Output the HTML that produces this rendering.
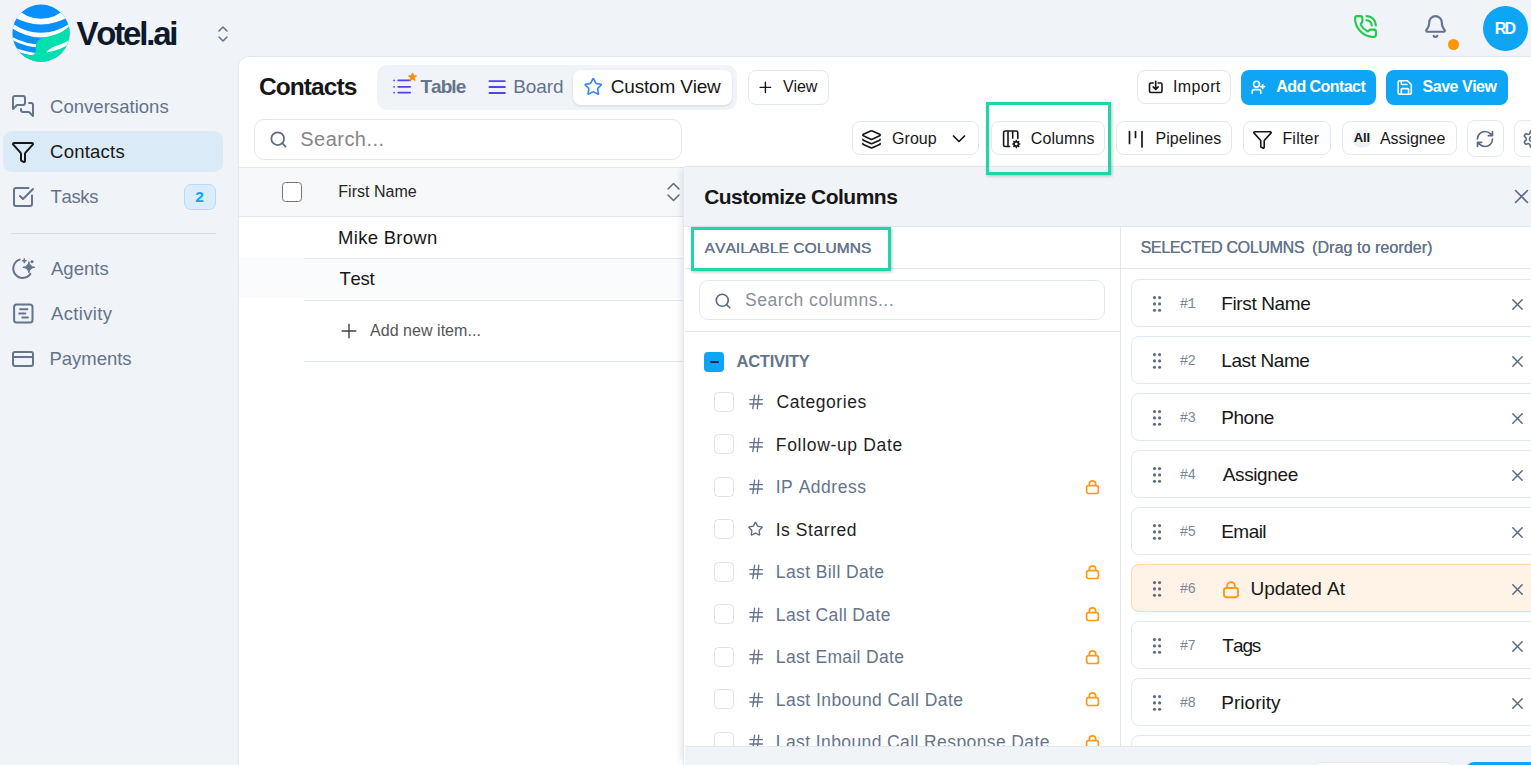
<!DOCTYPE html>
<html><head><meta charset="utf-8"><title>Contacts</title>
<style>
html,body{margin:0;padding:0;}
body{width:1531px;height:765px;overflow:hidden;position:relative;background:#f0f3f8;font-family:"Liberation Sans",sans-serif;font-kerning:none;}
.t{position:absolute;line-height:1;white-space:nowrap;font-kerning:none;}
.b{position:absolute;box-sizing:border-box;}
svg.b{overflow:visible;}
</style></head><body>
<div class="b" style="left:238px;top:56px;width:1293px;height:709px;background:#fff;border-left:1px solid #e2e8f0;border-top:1px solid #e2e8f0;border-top-left-radius:10px;"></div>
<svg class="b" style="left:12px;top:4px;" width="58" height="58" viewBox="0 0 58 58" fill="none"><defs><clipPath id="gc"><circle cx="29" cy="29.2" r="28.6"/></clipPath></defs><g clip-path="url(#gc)"><rect x="0" y="0" width="58" height="60" fill="#0a90fb"/><path d="M-1 0.5 Q29 29.1 59 0.5 L59 11.5 Q29 29.5 -1 11.5 Z" fill="#fff"/><path d="M-1 18.8 Q29 38.8 59 18.8 L59 23.5 Q29 43.5 -1 23.5 Z" fill="#fff"/><path d="M-1 32.5 Q29 48.5 59 32.5 L59 35.5 Q29 51.5 -1 35.5 Z" fill="#fff"/><path d="M-1 42 Q29 56 59 42 L59 45 Q29 59 -1 45 Z" fill="#fff"/><path d="M60 18 C 55 27 45 31 34 33 C 27 34.5 24 37.5 23.9 42 L 23.9 46 C 23.9 49 21.5 51.5 17.5 51.3 C 13 51 10 50 7.9 48.2 L 0 60 L 60 60 Z" fill="#00dfae"/><path d="M34.1 48.4 C 37 45 42 42 48 40.5 C 52 39.4 55 37.5 58 35.5 L 58 39.5 C 52 43.5 44 47 34.1 48.4 Z" fill="#fff"/></g></svg>
<div class="t" style="left:76.47px;top:17.00px;font-size:33px;font-weight:700;color:#0c1a2b;letter-spacing:-2.187px;font-family:'Liberation Sans', sans-serif;">Votel.ai</div>
<svg class="b" style="left:216px;top:25px;" width="14" height="18" viewBox="0 0 14 18" fill="none"><path d="M3 6 L7 2 L11 6 M3 12 L7 16 L11 12" stroke="#64748b" stroke-width="1.6" stroke-linecap="round" stroke-linejoin="round"/></svg>
<svg class="b" style="left:1353px;top:14px;" width="25" height="25" viewBox="0 0 24 24" fill="none"><path d="M13 2a9 9 0 0 1 9 9" stroke="#1ec94c" stroke-width="2" stroke-linecap="round"/><path d="M13 6a5 5 0 0 1 5 5" stroke="#1ec94c" stroke-width="2" stroke-linecap="round"/><path d="M13.832 16.568a1 1 0 0 0 1.213-.303l.355-.465A2 2 0 0 1 17 15h3a2 2 0 0 1 2 2v3a2 2 0 0 1-2 2A18 18 0 0 1 2 4a2 2 0 0 1 2-2h3a2 2 0 0 1 2 2v3a2 2 0 0 1-.8 1.6l-.468.351a1 1 0 0 0-.292 1.233 14 14 0 0 0 6.392 6.384" stroke="#1ec94c" stroke-width="2" stroke-linecap="round" stroke-linejoin="round"/></svg>
<svg class="b" style="left:1423px;top:14px;" width="25" height="25" viewBox="0 0 24 24" fill="none"><path d="M10.268 21a2 2 0 0 0 3.464 0" stroke="#64748b" stroke-width="2" stroke-linecap="round"/><path d="M3.262 15.326A1 1 0 0 0 4 17h16a1 1 0 0 0 .74-1.673C19.41 13.956 18 12.499 18 8A6 6 0 0 0 6 8c0 4.499-1.411 5.956-2.738 7.326" stroke="#64748b" stroke-width="2" stroke-linecap="round" stroke-linejoin="round"/></svg>
<div class="b" style="left:1447.5px;top:38.5px;width:11px;height:11px;background:#ff9500;border-radius:50%;"></div>
<div class="b" style="left:1483px;top:6px;width:45px;height:45px;background:#0ea5f5;border-radius:50%;"></div>
<div class="t" style="left:1494.73px;top:21.00px;font-size:16px;font-weight:700;color:#fff;letter-spacing:-1.767px;font-family:'Liberation Sans', sans-serif;">RD</div>
<div class="b" style="left:3px;top:131px;width:220px;height:41px;background:#dbeaf7;border-radius:9px;"></div>
<svg class="b" style="left:11px;top:94px;" width="24" height="24" viewBox="0 0 24 24" fill="none"><path d="M14 9a2 2 0 0 1-2 2H6l-4 4V4a2 2 0 0 1 2-2h8a2 2 0 0 1 2 2z" stroke="#64748b" stroke-width="2" stroke-linecap="round" stroke-linejoin="round"/><path d="M18 9h2a2 2 0 0 1 2 2v11l-4-4h-6a2 2 0 0 1-2-2v-1" stroke="#64748b" stroke-width="2" stroke-linecap="round" stroke-linejoin="round"/></svg>
<div class="t" style="left:50.06px;top:98.00px;font-size:18.5px;font-weight:400;color:#64748b;letter-spacing:0.030px;font-family:'Liberation Sans', sans-serif;">Conversations</div>
<svg class="b" style="left:11px;top:140px;" width="24" height="24" viewBox="0 0 24 24" fill="none"><path d="M10 20a1 1 0 0 0 .553.895l2 1A1 1 0 0 0 14 21v-7a2 2 0 0 1 .517-1.341L21.74 4.67A1 1 0 0 0 21 3H3a1 1 0 0 0-.742 1.67l7.225 7.989A2 2 0 0 1 10 14z" stroke="#171717" stroke-width="2" stroke-linecap="round" stroke-linejoin="round"/></svg>
<div class="t" style="left:50.06px;top:143.00px;font-size:18.5px;font-weight:400;color:#171717;letter-spacing:0.229px;font-family:'Liberation Sans', sans-serif;">Contacts</div>
<svg class="b" style="left:11px;top:185px;" width="24" height="24" viewBox="0 0 24 24" fill="none"><path d="M21 10.5V19a2 2 0 0 1-2 2H5a2 2 0 0 1-2-2V5a2 2 0 0 1 2-2h12.5" stroke="#64748b" stroke-width="2" stroke-linecap="round" stroke-linejoin="round"/><path d="m9 11 3 3L22 4" stroke="#64748b" stroke-width="2" stroke-linecap="round" stroke-linejoin="round"/></svg>
<div class="t" style="left:50.58px;top:188.00px;font-size:18.5px;font-weight:400;color:#64748b;letter-spacing:-0.364px;font-family:'Liberation Sans', sans-serif;">Tasks</div>
<div class="b" style="left:184px;top:184px;width:32px;height:26px;background:#dbedfa;border:1px solid #b3dcf8;border-radius:7px;"></div>
<div class="t" style="left:195.26px;top:189.00px;font-size:15.5px;font-weight:700;color:#0ea5f5;letter-spacing:0.000px;font-family:'Liberation Sans', sans-serif;">2</div>
<div class="b" style="left:11px;top:233px;width:205px;height:1px;background:#d9dee6;"></div>
<svg class="b" style="left:11px;top:257px;" width="24" height="24" viewBox="0 0 24 24" fill="none"><path d="M8.7 2.6 A9.4 9.4 0 1 0 19.4 16.9" stroke="#64748b" stroke-width="2" stroke-linecap="round" stroke-linejoin="round"/><path d="M17.9 4.7 Q18.6 9.6 23.9 10.3 Q18.6 11 17.9 15.9 Q17.2 11 11.9 10.3 Q17.2 9.6 17.9 4.7 Z" fill="#64748b" stroke="#64748b" stroke-width="1" stroke-linejoin="round"/><path d="M13.3 2v3.4 M11.6 3.7h3.4" stroke="#64748b" stroke-width="1.6" stroke-linecap="round"/><path d="M21 3.2 L22.5 4.7 L21 6.2 L19.5 4.7 Z" fill="#64748b" stroke="#64748b" stroke-width="0.8" stroke-linejoin="round"/></svg>
<div class="t" style="left:50.96px;top:260.00px;font-size:18.5px;font-weight:400;color:#64748b;letter-spacing:0.022px;font-family:'Liberation Sans', sans-serif;">Agents</div>
<svg class="b" style="left:11px;top:302px;" width="24" height="24" viewBox="0 0 24 24" fill="none"><rect x="3.1" y="2.5" width="18.4" height="17.9" rx="2.5" stroke="#64748b" stroke-width="2" stroke-linecap="round" stroke-linejoin="round"/><path d="M9.2 7.3h7.2 M8.2 11.4h6.1 M11.3 15.5h5.6" stroke="#64748b" stroke-width="2" stroke-linecap="round" stroke-linejoin="round"/></svg>
<div class="t" style="left:50.96px;top:305.00px;font-size:18.5px;font-weight:400;color:#64748b;letter-spacing:0.355px;font-family:'Liberation Sans', sans-serif;">Activity</div>
<svg class="b" style="left:11px;top:347px;" width="24" height="24" viewBox="0 0 24 24" fill="none"><rect x="2" y="5" width="20" height="14" rx="2" stroke="#64748b" stroke-width="2" stroke-linecap="round" stroke-linejoin="round"/><path d="M2 10h20" stroke="#64748b" stroke-width="2" stroke-linecap="round" stroke-linejoin="round"/></svg>
<div class="t" style="left:49.48px;top:350.00px;font-size:18.5px;font-weight:400;color:#64748b;letter-spacing:-0.024px;font-family:'Liberation Sans', sans-serif;">Payments</div>
<div class="t" style="left:258.90px;top:75.00px;font-size:24.5px;font-weight:700;color:#171717;letter-spacing:-0.901px;font-family:'Liberation Sans', sans-serif;">Contacts</div>
<div class="b" style="left:377px;top:65px;width:359.5px;height:45px;background:#f0f3f8;border-radius:10px;"></div>
<div class="b" style="left:573px;top:70px;width:159px;height:34.7px;background:#fff;border-radius:8px;box-shadow:0 1px 3px rgba(15,23,42,0.12);"></div>
<svg class="b" style="left:392px;top:78px;" width="20" height="17" viewBox="0 0 20 17" fill="none"><path d="M6.2 2.4h12 M6.2 8.8h12 M6.2 14.6h12" stroke="#4f46e5" stroke-width="1.7" stroke-linecap="round"/><path d="M2.1 2.4h.05 M2.1 8.8h.05 M2.1 14.6h.05" stroke="#4f46e5" stroke-width="1.8" stroke-linecap="round"/></svg>
<svg class="b" style="left:406.5px;top:71.5px;" width="11" height="10" viewBox="0 0 24 24" fill="none"><path d="M12 1.5l3.1 6.6 7.2.9-5.3 4.9 1.4 7.1L12 17.5 5.6 21l1.4-7.1L1.7 9l7.2-.9z" fill="#fb8c0f" stroke="#fb8c0f" stroke-width="1.5" stroke-linejoin="round"/></svg>
<div class="t" style="left:420.39px;top:77.00px;font-size:19px;font-weight:700;color:#64748b;letter-spacing:-0.940px;font-family:'Liberation Sans', sans-serif;">Table</div>
<svg class="b" style="left:487px;top:79px;" width="20" height="17" viewBox="0 0 20 17" fill="none"><path d="M2.4 2.1h15.5 M2.4 8h15.5 M2.4 14h15.5" stroke="#4f46e5" stroke-width="1.8" stroke-linecap="round"/></svg>
<div class="t" style="left:513.14px;top:77.00px;font-size:19px;font-weight:400;color:#64748b;letter-spacing:-0.079px;font-family:'Liberation Sans', sans-serif;">Board</div>
<svg class="b" style="left:582.5px;top:77px;" width="20.5" height="19.5" viewBox="0 0 24 24" fill="none"><path d="M11.525 2.295a.53.53 0 0 1 .95 0l2.31 4.679a2.123 2.123 0 0 0 1.595 1.16l5.166.756a.53.53 0 0 1 .294.904l-3.736 3.638a2.123 2.123 0 0 0-.611 1.878l.882 5.14a.53.53 0 0 1-.771.56l-4.618-2.428a2.122 2.122 0 0 0-1.973 0L6.396 21.01a.53.53 0 0 1-.77-.56l.881-5.139a2.122 2.122 0 0 0-.611-1.879L2.16 9.795a.53.53 0 0 1 .294-.906l5.165-.755a2.122 2.122 0 0 0 1.597-1.16z" stroke="#3b82f6" stroke-width="2" stroke-linejoin="round"/></svg>
<div class="t" style="left:610.74px;top:77.00px;font-size:19px;font-weight:400;color:#171717;letter-spacing:-0.190px;font-family:'Liberation Sans', sans-serif;">Custom View</div>
<div class="b" style="left:747.5px;top:70px;width:81px;height:34.7px;background:#fff;border:1px solid #e2e8f0;border-radius:8px;"></div>
<svg class="b" style="left:759px;top:81px;" width="13" height="13" viewBox="0 0 13 13" fill="none"><path d="M6.4 1.3v10.3 M1.2 6.4h10.4" stroke="#171717" stroke-width="1.4" stroke-linecap="round"/></svg>
<div class="t" style="left:782.93px;top:79.00px;font-size:16px;font-weight:400;color:#171717;letter-spacing:-0.116px;font-family:'Liberation Sans', sans-serif;">View</div>
<div class="b" style="left:1137.3px;top:70.4px;width:93.5px;height:34px;background:#fff;border:1px solid #e2e8f0;border-radius:8px;"></div>
<svg class="b" style="left:1144px;top:74px;" width="26" height="26" viewBox="0 0 26 26" fill="none"><path d="M9.3 9H7a1.5 1.5 0 0 0-1.5 1.5v6.5A1.5 1.5 0 0 0 7 18.5h9.5a1.5 1.5 0 0 0 1.5-1.5v-6.5A1.5 1.5 0 0 0 16.5 9h-2.3" stroke="#171717" stroke-width="1.6" stroke-linecap="round" stroke-linejoin="round"/><path d="M11.7 7.3v8 M9.2 12.9l2.5 2.5 2.5-2.5" stroke="#171717" stroke-width="1.6" stroke-linecap="round" stroke-linejoin="round"/></svg>
<div class="t" style="left:1173.02px;top:79.00px;font-size:16px;font-weight:400;color:#171717;letter-spacing:0.390px;font-family:'Liberation Sans', sans-serif;">Import</div>
<div class="b" style="left:1241.3px;top:70.4px;width:134.3px;height:34.5px;background:#0ea5f5;border-radius:8px;"></div>
<svg class="b" style="left:1246px;top:74px;" width="26" height="26" viewBox="0 0 26 26" fill="none"><circle cx="10.5" cy="10.2" r="2.9" stroke="#fff" stroke-width="1.6"/><path d="M6.2 19.2v-1.6a2 2 0 0 1 2-2h4.6a2 2 0 0 1 2 2v1.6" stroke="#fff" stroke-width="1.6" stroke-linecap="round"/><path d="M16.7 10.6v4 M14.7 12.6h4" stroke="#fff" stroke-width="1.6" stroke-linecap="round"/></svg>
<div class="t" style="left:1276.20px;top:79.00px;font-size:16px;font-weight:700;color:#fff;letter-spacing:-0.551px;font-family:'Liberation Sans', sans-serif;">Add Contact</div>
<div class="b" style="left:1386px;top:70.4px;width:121.7px;height:34.5px;background:#0ea5f5;border-radius:8px;"></div>
<svg class="b" style="left:1392px;top:74px;" width="26" height="26" viewBox="0 0 26 26" fill="none"><path d="M7.7 6.8h7.8l3.8 3.8v8.2a1.5 1.5 0 0 1-1.5 1.5H7.7a1.5 1.5 0 0 1-1.5-1.5V8.3a1.5 1.5 0 0 1 1.5-1.5z" stroke="#fff" stroke-width="1.6" stroke-linejoin="round"/><path d="M9.3 7v2.6a0.9 0.9 0 0 0 .9.9h4.8 M9.3 20.2v-4.6a1 1 0 0 1 1-1h5.3a1 1 0 0 1 1 1v4.6" stroke="#fff" stroke-width="1.6" stroke-linecap="round" stroke-linejoin="round"/></svg>
<div class="t" style="left:1422.54px;top:79.00px;font-size:16px;font-weight:700;color:#fff;letter-spacing:-0.480px;font-family:'Liberation Sans', sans-serif;">Save View</div>
<div class="b" style="left:254px;top:118.5px;width:427.5px;height:41.2px;background:#fff;border:1px solid #e2e8f0;border-radius:10px;"></div>
<svg class="b" style="left:269px;top:130px;" width="19" height="19" viewBox="0 0 24 24" fill="none"><circle cx="11" cy="11" r="8" stroke="#5b6b82" stroke-width="2.2"/><path d="m21 21-4.3-4.3" stroke="#5b6b82" stroke-width="2.2" stroke-linecap="round"/></svg>
<div class="t" style="left:300.29px;top:129.00px;font-size:20px;font-weight:400;color:#868686;letter-spacing:0.462px;font-family:'Liberation Sans', sans-serif;">Search...</div>
<div class="b" style="left:851.7px;top:121.3px;width:127.7px;height:34px;background:#fff;border:1px solid #e2e8f0;border-radius:8px;"></div>
<svg class="b" style="left:861px;top:129px;" width="21" height="19" viewBox="0 0 24 22" fill="none"><path d="M12.83 2.18a2 2 0 0 0-1.66 0L2.6 6.08a1 1 0 0 0 0 1.83l8.58 3.91a2 2 0 0 0 1.66 0l8.58-3.9a1 1 0 0 0 0-1.83z" stroke="#171717" stroke-width="1.9" stroke-linejoin="round"/><path d="M2 12a1 1 0 0 0 .58.91l8.6 3.91a2 2 0 0 0 1.65 0l8.58-3.9A1 1 0 0 0 22 12 M2 17a1 1 0 0 0 .58.91l8.6 3.91a2 2 0 0 0 1.65 0l8.58-3.9A1 1 0 0 0 22 17" stroke="#171717" stroke-width="1.9" stroke-linecap="round" stroke-linejoin="round"/></svg>
<div class="t" style="left:892.00px;top:131.00px;font-size:16px;font-weight:400;color:#171717;letter-spacing:0.052px;font-family:'Liberation Sans', sans-serif;">Group</div>
<svg class="b" style="left:952px;top:134px;" width="14" height="10" viewBox="0 0 14 10" fill="none"><path d="M1.5 2 L7 7.5 L12.5 2" stroke="#171717" stroke-width="1.7" stroke-linecap="round" stroke-linejoin="round"/></svg>
<div class="b" style="left:990.5px;top:121.3px;width:114px;height:34px;background:#fff;border:1px solid #e2e8f0;border-radius:8px;"></div>
<svg class="b" style="left:1002px;top:130px;" width="20" height="19" viewBox="0 0 20 19" fill="none"><path d="M7.5 16.5H3.2a1.6 1.6 0 0 1-1.6-1.6V2.6A1.6 1.6 0 0 1 3.2 1h11a1.6 1.6 0 0 1 1.6 1.6v6" stroke="#171717" stroke-width="1.6" stroke-linecap="round" stroke-linejoin="round"/><path d="M6 1.2v15.3 M10.7 1.2v7.5" stroke="#171717" stroke-width="1.6"/><circle cx="14.3" cy="14" r="2.2" stroke="#171717" stroke-width="1.5"/><path d="M14.3 10.6v1.1 M14.3 16.3v1.1 M10.9 14h1.1 M16.6 14h1.1 M11.9 11.6l.8.8 M15.9 15.6l.8.8 M11.9 16.4l.8-.8 M15.9 12.4l.8-.8" stroke="#171717" stroke-width="1.5" stroke-linecap="round"/></svg>
<div class="t" style="left:1030.79px;top:131.00px;font-size:16px;font-weight:400;color:#171717;letter-spacing:0.093px;font-family:'Liberation Sans', sans-serif;">Columns</div>
<div class="b" style="left:1115.5px;top:121.3px;width:116px;height:34px;background:#fff;border:1px solid #e2e8f0;border-radius:8px;"></div>
<svg class="b" style="left:1127px;top:129px;" width="18" height="20" viewBox="0 0 18 20" fill="none"><path d="M2.5 2.5v12 M8.5 2.5v6 M15 2.5v15.5" stroke="#171717" stroke-width="1.7" stroke-linecap="round"/></svg>
<div class="t" style="left:1155.39px;top:131.00px;font-size:16px;font-weight:400;color:#171717;letter-spacing:0.120px;font-family:'Liberation Sans', sans-serif;">Pipelines</div>
<div class="b" style="left:1242.5px;top:121.3px;width:88px;height:34px;background:#fff;border:1px solid #e2e8f0;border-radius:8px;"></div>
<svg class="b" style="left:1252px;top:130px;" width="21" height="19" viewBox="0 0 24 22" fill="none"><path d="M10 19a1 1 0 0 0 .553.895l2 1A1 1 0 0 0 14 20v-7a2 2 0 0 1 .517-1.341L21.74 3.67A1 1 0 0 0 21 2H3a1 1 0 0 0-.742 1.67l7.225 7.989A2 2 0 0 1 10 13z" stroke="#171717" stroke-width="1.9" stroke-linecap="round" stroke-linejoin="round"/></svg>
<div class="t" style="left:1282.39px;top:131.00px;font-size:16px;font-weight:400;color:#171717;letter-spacing:0.225px;font-family:'Liberation Sans', sans-serif;">Filter</div>
<div class="b" style="left:1341.5px;top:121.3px;width:115px;height:34px;background:#fff;border:1px solid #e2e8f0;border-radius:8px;"></div>
<div class="b" style="left:1352px;top:129.4px;width:19.5px;height:19px;background:#eef2f7;border-radius:50%;"></div>
<div class="t" style="left:1353.68px;top:131.00px;font-size:13px;font-weight:700;color:#171717;letter-spacing:-0.034px;font-family:'Liberation Sans', sans-serif;">All</div>
<div class="t" style="left:1379.97px;top:131.00px;font-size:16px;font-weight:400;color:#171717;letter-spacing:-0.068px;font-family:'Liberation Sans', sans-serif;">Assignee</div>
<div class="b" style="left:1467px;top:120px;width:37px;height:36.7px;background:#fff;border:1px solid #e2e8f0;border-radius:8px;"></div>
<svg class="b" style="left:1475px;top:129px;" width="20" height="20" viewBox="0 0 24 24" fill="none"><path d="M3 12a9 9 0 0 1 9-9 9.75 9.75 0 0 1 6.74 2.74L21 8 M21 3v5h-5 M21 12a9 9 0 0 1-9 9 9.750 9.75 0 0 1-6.74-2.74L3 16 M8 16H3v5" stroke="#5b6b82" stroke-width="2" stroke-linecap="round" stroke-linejoin="round"/></svg>
<div class="b" style="left:1514px;top:120px;width:40px;height:36.7px;background:#fff;border:1px solid #e2e8f0;border-radius:8px;"></div>
<svg class="b" style="left:1522px;top:128.5px;" width="20" height="20" viewBox="0 0 24 24" fill="none"><path d="M12.22 2h-.44a2 2 0 0 0-2 2v.18a2 2 0 0 1-1 1.73l-.43.25a2 2 0 0 1-2 0l-.15-.08a2 2 0 0 0-2.73.73l-.22.38a2 2 0 0 0 .73 2.730l.15.1a2 2 0 0 1 1 1.72v.51a2 2 0 0 1-1 1.74l-.15.09a2 2 0 0 0-.73 2.73l.22.38a2 2 0 0 0 2.73.73l.15-.08a2 2 0 0 1 2 0l.43.25a2 2 0 0 1 1 1.73V20a2 2 0 0 0 2 2h.44a2 2 0 0 0 2-2v-.18a2 2 0 0 1 1-1.73l.43-.25a2 2 0 0 1 2 0l.15.08a2 2 0 0 0 2.73-.73l.22-.39a2 2 0 0 0-.73-2.73l-.15-.08a2 2 0 0 1-1-1.74v-.5a2 2 0 0 1 1-1.74l.15-.09a2 2 0 0 0 .73-2.73l-.22-.38a2 2 0 0 0-2.73-.73l-.15.08a2 2 0 0 1-2 0l-.43-.25a2 2 0 0 1-1-1.73V4a2 2 0 0 0-2-2z" stroke="#5b6b82" stroke-width="2"/><circle cx="12" cy="12" r="3" stroke="#5b6b82" stroke-width="2"/></svg>
<div class="b" style="left:239px;top:167px;width:1292px;height:1px;background:#e2e8f0;"></div>
<div class="b" style="left:239px;top:168px;width:445px;height:48.5px;background:#f6f8fa;border-bottom:1px solid #e2e8f0;"></div>
<div class="b" style="left:282px;top:182px;width:20px;height:20px;background:#fff;border:1.4px solid #767676;border-radius:3.5px;"></div>
<div class="t" style="left:338.29px;top:184.00px;font-size:16px;font-weight:400;color:#262626;letter-spacing:0.022px;font-family:'Liberation Sans', sans-serif;">First Name</div>
<svg class="b" style="left:665px;top:181px;" width="17" height="22" viewBox="0 0 17 22" fill="none"><path d="M3 8 L8.5 2.5 L14 8 M3 14 L8.5 19.5 L14 14" stroke="#5b6b82" stroke-width="1.5" stroke-linecap="round" stroke-linejoin="round"/></svg>
<div class="t" style="left:338.08px;top:229.00px;font-size:18.5px;font-weight:400;color:#171717;letter-spacing:0.287px;font-family:'Liberation Sans', sans-serif;">Mike Brown</div>
<div class="b" style="left:239px;top:258px;width:445px;height:40px;background:#fafbfd;"></div>
<div class="b" style="left:303.7px;top:258.2px;width:380px;height:1px;background:#e2e8f0;"></div>
<div class="b" style="left:303.7px;top:300px;width:380px;height:1px;background:#e2e8f0;"></div>
<div class="t" style="left:339.58px;top:270.00px;font-size:18.5px;font-weight:400;color:#171717;letter-spacing:-0.309px;font-family:'Liberation Sans', sans-serif;">Test</div>
<svg class="b" style="left:341px;top:323px;" width="16" height="16" viewBox="0 0 16 16" fill="none"><path d="M8 1.2v13.6 M1.2 8h13.6" stroke="#404040" stroke-width="1.4" stroke-linecap="round"/></svg>
<div class="t" style="left:369.97px;top:323.00px;font-size:16px;font-weight:400;color:#555555;letter-spacing:0.044px;font-family:'Liberation Sans', sans-serif;">Add new item...</div>
<div class="b" style="left:303.7px;top:361.2px;width:380px;height:1px;background:#e2e8f0;"></div>
<div class="b" style="left:683px;top:166px;width:848px;height:599px;background:#fff;border-left:1px solid #e2e8f0;border-top:1px solid #e2e8f0;border-top-left-radius:4px;box-shadow:-5px 0 6px -3px rgba(15,23,42,0.10);"></div>
<div class="b" style="left:684px;top:167px;width:847px;height:60px;background:#f0f3f8;border-bottom:1px solid #e2e8f0;border-top-left-radius:3px;"></div>
<div class="t" style="left:704.14px;top:186.00px;font-size:21px;font-weight:700;color:#171717;letter-spacing:-0.508px;font-family:'Liberation Sans', sans-serif;">Customize Columns</div>
<svg class="b" style="left:1513px;top:188px;" width="17" height="17" viewBox="0 0 17 17" fill="none"><path d="M2.5 2.5l12 12 M14.5 2.5l-12 12" stroke="#5b6b82" stroke-width="1.6" stroke-linecap="round"/></svg>
<div class="b" style="left:1120px;top:227px;width:1px;height:519px;background:#e2e8f0;"></div>
<div class="b" style="left:684.5px;top:268px;width:847px;height:1px;background:#e2e8f0;"></div>
<div class="t" style="left:704.57px;top:240.00px;font-size:15.5px;font-weight:400;color:#64748b;letter-spacing:0.078px;font-family:'Liberation Sans', sans-serif;text-shadow:0.3px 0 0 #64748b;">AVAILABLE COLUMNS</div>
<div class="t" style="left:1140.47px;top:240.00px;font-size:16px;font-weight:400;color:#64748b;letter-spacing:-0.337px;font-family:'Liberation Sans', sans-serif;text-shadow:0.3px 0 0 #64748b;">SELECTED COLUMNS</div>
<div class="t" style="left:1312.01px;top:240.00px;font-size:16px;font-weight:400;color:#64748b;letter-spacing:0.077px;font-family:'Liberation Sans', sans-serif;text-shadow:0.2px 0 0 #64748b;">(Drag to reorder)</div>
<div class="b" style="left:699px;top:279.6px;width:406px;height:40.7px;background:#fff;border:1px solid #e2e8f0;border-radius:9px;"></div>
<svg class="b" style="left:713.5px;top:291.5px;" width="18" height="18" viewBox="0 0 24 24" fill="none"><circle cx="11" cy="11" r="8" stroke="#5b6b82" stroke-width="2.2"/><path d="m21 21-4.3-4.3" stroke="#5b6b82" stroke-width="2.2" stroke-linecap="round"/></svg>
<div class="t" style="left:745.11px;top:292.00px;font-size:17.5px;font-weight:400;color:#8a8f98;letter-spacing:0.527px;font-family:'Liberation Sans', sans-serif;">Search columns...</div>
<div class="b" style="left:684.5px;top:330.5px;width:436px;height:1px;background:#e2e8f0;"></div>
<div class="b" style="left:704.2px;top:352.1px;width:19.6px;height:19.6px;background:#0ea5f5;border-radius:4px;"></div>
<div class="b" style="left:710.2px;top:361.2px;width:8.5px;height:2.3px;background:#1e293b;border-radius:1px;"></div>
<div class="t" style="left:736.59px;top:353.00px;font-size:16.5px;font-weight:700;color:#64748b;letter-spacing:-0.270px;font-family:'Liberation Sans', sans-serif;">ACTIVITY</div>
<div class="b" style="left:684.5px;top:332px;width:435.5px;height:414px;overflow:hidden;">
<div class="b" style="left:29.5px;top:59.7px;width:20px;height:20px;border:1.8px solid #dbe2ec;border-radius:4.5px;background:#fff;"></div>
<svg class="b" style="left:63.5px;top:62.0px" width="16" height="16" viewBox="0 0 16 16" fill="none"><path d="M1.8 5.6h12.6 M1.8 10h12.6 M6.6 1.2l-1.8 13.4 M10.8 1.2l-1.5 13.4" stroke="#64748b" stroke-width="1.35" stroke-linecap="round"/></svg>
<div class="t" style="left:91.91px;top:62.00px;font-size:17.5px;color:#1f1f1f;letter-spacing:0.588px;">Categories</div>
<div class="b" style="left:29.5px;top:102.2px;width:20px;height:20px;border:1.8px solid #dbe2ec;border-radius:4.5px;background:#fff;"></div>
<svg class="b" style="left:63.5px;top:104.5px" width="16" height="16" viewBox="0 0 16 16" fill="none"><path d="M1.8 5.6h12.6 M1.8 10h12.6 M6.6 1.2l-1.8 13.4 M10.8 1.2l-1.5 13.4" stroke="#64748b" stroke-width="1.35" stroke-linecap="round"/></svg>
<div class="t" style="left:91.36px;top:105.00px;font-size:17.5px;color:#1f1f1f;letter-spacing:0.671px;">Follow-up Date</div>
<div class="b" style="left:29.5px;top:144.7px;width:20px;height:20px;border:1.8px solid #dbe2ec;border-radius:4.5px;background:#fff;"></div>
<svg class="b" style="left:63.5px;top:147.0px" width="16" height="16" viewBox="0 0 16 16" fill="none"><path d="M1.8 5.6h12.6 M1.8 10h12.6 M6.6 1.2l-1.8 13.4 M10.8 1.2l-1.5 13.4" stroke="#64748b" stroke-width="1.35" stroke-linecap="round"/></svg>
<div class="t" style="left:91.19px;top:147.00px;font-size:17.5px;color:#64748b;letter-spacing:0.517px;">IP Address</div>
<svg class="b" style="left:400.5px;top:146.5px" width="15" height="16" viewBox="0 0 15 16" fill="none"><rect x="1.6" y="6.7" width="11.8" height="7.8" rx="2" stroke="#fb9a14" stroke-width="1.7"/><path d="M4.3 6.7V5a3.2 3.2 0 0 1 6.4 0v1.7" stroke="#fb9a14" stroke-width="1.7"/></svg>
<div class="b" style="left:29.5px;top:187.2px;width:20px;height:20px;border:1.8px solid #dbe2ec;border-radius:4.5px;background:#fff;"></div>
<svg class="b" style="left:62.5px;top:189.0px" width="17" height="16" viewBox="0 0 24 24" fill="none"><path d="M11.525 2.295a.53.53 0 0 1 .95 0l2.31 4.679a2.123 2.123 0 0 0 1.595 1.16l5.166.756a.53.53 0 0 1 .294.904l-3.736 3.638a2.123 2.123 0 0 0-.611 1.878l.882 5.14a.53.53 0 0 1-.771.56l-4.618-2.428a2.122 2.122 0 0 0-1.973 0L6.396 21.01a.53.53 0 0 1-.77-.56l.881-5.139a2.122 2.122 0 0 0-.611-1.879L2.16 9.795a.53.53 0 0 1 .294-.906l5.165-.755a2.122 2.122 0 0 0 1.597-1.160z" stroke="#5b6b82" stroke-width="2" stroke-linejoin="round"/></svg>
<div class="t" style="left:91.19px;top:190.00px;font-size:17.5px;color:#1f1f1f;letter-spacing:0.553px;">Is Starred</div>
<div class="b" style="left:29.5px;top:229.7px;width:20px;height:20px;border:1.8px solid #dbe2ec;border-radius:4.5px;background:#fff;"></div>
<svg class="b" style="left:63.5px;top:232.0px" width="16" height="16" viewBox="0 0 16 16" fill="none"><path d="M1.8 5.6h12.6 M1.8 10h12.6 M6.6 1.2l-1.8 13.4 M10.8 1.2l-1.5 13.4" stroke="#64748b" stroke-width="1.35" stroke-linecap="round"/></svg>
<div class="t" style="left:91.36px;top:232.00px;font-size:17.5px;color:#64748b;letter-spacing:0.393px;">Last Bill Date</div>
<svg class="b" style="left:400.5px;top:231.5px" width="15" height="16" viewBox="0 0 15 16" fill="none"><rect x="1.6" y="6.7" width="11.8" height="7.8" rx="2" stroke="#fb9a14" stroke-width="1.7"/><path d="M4.3 6.7V5a3.2 3.2 0 0 1 6.4 0v1.7" stroke="#fb9a14" stroke-width="1.7"/></svg>
<div class="b" style="left:29.5px;top:272.2px;width:20px;height:20px;border:1.8px solid #dbe2ec;border-radius:4.5px;background:#fff;"></div>
<svg class="b" style="left:63.5px;top:274.5px" width="16" height="16" viewBox="0 0 16 16" fill="none"><path d="M1.8 5.6h12.6 M1.8 10h12.6 M6.6 1.2l-1.8 13.4 M10.8 1.2l-1.5 13.4" stroke="#64748b" stroke-width="1.35" stroke-linecap="round"/></svg>
<div class="t" style="left:91.36px;top:275.00px;font-size:17.5px;color:#64748b;letter-spacing:0.354px;">Last Call Date</div>
<svg class="b" style="left:400.5px;top:274.0px" width="15" height="16" viewBox="0 0 15 16" fill="none"><rect x="1.6" y="6.7" width="11.8" height="7.8" rx="2" stroke="#fb9a14" stroke-width="1.7"/><path d="M4.3 6.7V5a3.2 3.2 0 0 1 6.4 0v1.7" stroke="#fb9a14" stroke-width="1.7"/></svg>
<div class="b" style="left:29.5px;top:314.7px;width:20px;height:20px;border:1.8px solid #dbe2ec;border-radius:4.5px;background:#fff;"></div>
<svg class="b" style="left:63.5px;top:317.0px" width="16" height="16" viewBox="0 0 16 16" fill="none"><path d="M1.8 5.6h12.6 M1.8 10h12.6 M6.6 1.2l-1.8 13.4 M10.8 1.2l-1.5 13.4" stroke="#64748b" stroke-width="1.35" stroke-linecap="round"/></svg>
<div class="t" style="left:91.36px;top:317.00px;font-size:17.5px;color:#64748b;letter-spacing:0.328px;">Last Email Date</div>
<svg class="b" style="left:400.5px;top:316.5px" width="15" height="16" viewBox="0 0 15 16" fill="none"><rect x="1.6" y="6.7" width="11.8" height="7.8" rx="2" stroke="#fb9a14" stroke-width="1.7"/><path d="M4.3 6.7V5a3.2 3.2 0 0 1 6.4 0v1.7" stroke="#fb9a14" stroke-width="1.7"/></svg>
<div class="b" style="left:29.5px;top:357.2px;width:20px;height:20px;border:1.8px solid #dbe2ec;border-radius:4.5px;background:#fff;"></div>
<svg class="b" style="left:63.5px;top:359.5px" width="16" height="16" viewBox="0 0 16 16" fill="none"><path d="M1.8 5.6h12.6 M1.8 10h12.6 M6.6 1.2l-1.8 13.4 M10.8 1.2l-1.5 13.4" stroke="#64748b" stroke-width="1.35" stroke-linecap="round"/></svg>
<div class="t" style="left:91.36px;top:360.00px;font-size:17.5px;color:#64748b;letter-spacing:0.432px;">Last Inbound Call Date</div>
<svg class="b" style="left:400.5px;top:359.0px" width="15" height="16" viewBox="0 0 15 16" fill="none"><rect x="1.6" y="6.7" width="11.8" height="7.8" rx="2" stroke="#fb9a14" stroke-width="1.7"/><path d="M4.3 6.7V5a3.2 3.2 0 0 1 6.4 0v1.7" stroke="#fb9a14" stroke-width="1.7"/></svg>
<div class="b" style="left:29.5px;top:399.7px;width:20px;height:20px;border:1.8px solid #dbe2ec;border-radius:4.5px;background:#fff;"></div>
<svg class="b" style="left:63.5px;top:402.0px" width="16" height="16" viewBox="0 0 16 16" fill="none"><path d="M1.8 5.6h12.6 M1.8 10h12.6 M6.6 1.2l-1.8 13.4 M10.8 1.2l-1.5 13.4" stroke="#64748b" stroke-width="1.35" stroke-linecap="round"/></svg>
<div class="t" style="left:91.36px;top:402.00px;font-size:17.5px;color:#64748b;letter-spacing:0.397px;">Last Inbound Call Response Date</div>
<svg class="b" style="left:400.5px;top:401.5px" width="15" height="16" viewBox="0 0 15 16" fill="none"><rect x="1.6" y="6.7" width="11.8" height="7.8" rx="2" stroke="#fb9a14" stroke-width="1.7"/><path d="M4.3 6.7V5a3.2 3.2 0 0 1 6.4 0v1.7" stroke="#fb9a14" stroke-width="1.7"/></svg>
</div>
<div class="b" style="left:1121px;top:269px;width:410px;height:477px;overflow:hidden;">
<div class="b" style="left:10.3px;top:10.4px;width:420px;height:48px;background:#fff;border:1px solid #e2e8f0;border-radius:8px;"></div>
<svg class="b" style="left:30px;top:26.0px" width="12" height="18" viewBox="0 0 12 18" fill="#5b6b82"><circle cx="3.5" cy="2.6" r="1.55"/><circle cx="8.6" cy="2.6" r="1.55"/><circle cx="3.5" cy="8.9" r="1.55"/><circle cx="8.6" cy="8.9" r="1.55"/><circle cx="3.5" cy="15.2" r="1.55"/><circle cx="8.6" cy="15.2" r="1.55"/></svg>
<div class="t" style="left:58.63px;top:28.00px;font-size:14px;font-family:'Liberation Mono',monospace;color:#7a879a;letter-spacing:-0.5px;">#1</div>
<div class="t" style="left:100.24px;top:25.00px;font-size:19px;color:#171717;letter-spacing:-0.366px;">First Name</div>
<svg class="b" style="left:389px;top:27.5px" width="15" height="15" viewBox="0 0 15 15" fill="none"><path d="M2.8 2.8l9.4 9.4 M12.2 2.8l-9.4 9.4" stroke="#5b6b82" stroke-width="1.5" stroke-linecap="round"/></svg>
<div class="b" style="left:10.3px;top:67.4px;width:420px;height:48px;background:#fff;border:1px solid #e2e8f0;border-radius:8px;"></div>
<svg class="b" style="left:30px;top:83.0px" width="12" height="18" viewBox="0 0 12 18" fill="#5b6b82"><circle cx="3.5" cy="2.6" r="1.55"/><circle cx="8.6" cy="2.6" r="1.55"/><circle cx="3.5" cy="8.9" r="1.55"/><circle cx="8.6" cy="8.9" r="1.55"/><circle cx="3.5" cy="15.2" r="1.55"/><circle cx="8.6" cy="15.2" r="1.55"/></svg>
<div class="t" style="left:58.63px;top:85.00px;font-size:14px;font-family:'Liberation Mono',monospace;color:#7a879a;letter-spacing:-0.5px;">#2</div>
<div class="t" style="left:100.24px;top:82.00px;font-size:19px;color:#171717;letter-spacing:-0.396px;">Last Name</div>
<svg class="b" style="left:389px;top:84.5px" width="15" height="15" viewBox="0 0 15 15" fill="none"><path d="M2.8 2.8l9.4 9.4 M12.2 2.8l-9.4 9.4" stroke="#5b6b82" stroke-width="1.5" stroke-linecap="round"/></svg>
<div class="b" style="left:10.3px;top:124.4px;width:420px;height:48px;background:#fff;border:1px solid #e2e8f0;border-radius:8px;"></div>
<svg class="b" style="left:30px;top:140.0px" width="12" height="18" viewBox="0 0 12 18" fill="#5b6b82"><circle cx="3.5" cy="2.6" r="1.55"/><circle cx="8.6" cy="2.6" r="1.55"/><circle cx="3.5" cy="8.9" r="1.55"/><circle cx="8.6" cy="8.9" r="1.55"/><circle cx="3.5" cy="15.2" r="1.55"/><circle cx="8.6" cy="15.2" r="1.55"/></svg>
<div class="t" style="left:58.63px;top:142.00px;font-size:14px;font-family:'Liberation Mono',monospace;color:#7a879a;letter-spacing:-0.5px;">#3</div>
<div class="t" style="left:100.24px;top:139.00px;font-size:19px;color:#171717;letter-spacing:-0.459px;">Phone</div>
<svg class="b" style="left:389px;top:141.5px" width="15" height="15" viewBox="0 0 15 15" fill="none"><path d="M2.8 2.8l9.4 9.4 M12.2 2.8l-9.4 9.4" stroke="#5b6b82" stroke-width="1.5" stroke-linecap="round"/></svg>
<div class="b" style="left:10.3px;top:181.4px;width:420px;height:48px;background:#fff;border:1px solid #e2e8f0;border-radius:8px;"></div>
<svg class="b" style="left:30px;top:197.0px" width="12" height="18" viewBox="0 0 12 18" fill="#5b6b82"><circle cx="3.5" cy="2.6" r="1.55"/><circle cx="8.6" cy="2.6" r="1.55"/><circle cx="3.5" cy="8.9" r="1.55"/><circle cx="8.6" cy="8.9" r="1.55"/><circle cx="3.5" cy="15.2" r="1.55"/><circle cx="8.6" cy="15.2" r="1.55"/></svg>
<div class="t" style="left:58.63px;top:199.00px;font-size:14px;font-family:'Liberation Mono',monospace;color:#7a879a;letter-spacing:-0.5px;">#4</div>
<div class="t" style="left:101.76px;top:196.00px;font-size:19px;color:#171717;letter-spacing:-0.383px;">Assignee</div>
<svg class="b" style="left:389px;top:198.5px" width="15" height="15" viewBox="0 0 15 15" fill="none"><path d="M2.8 2.8l9.4 9.4 M12.2 2.8l-9.4 9.4" stroke="#5b6b82" stroke-width="1.5" stroke-linecap="round"/></svg>
<div class="b" style="left:10.3px;top:238.4px;width:420px;height:48px;background:#fff;border:1px solid #e2e8f0;border-radius:8px;"></div>
<svg class="b" style="left:30px;top:254.0px" width="12" height="18" viewBox="0 0 12 18" fill="#5b6b82"><circle cx="3.5" cy="2.6" r="1.55"/><circle cx="8.6" cy="2.6" r="1.55"/><circle cx="3.5" cy="8.9" r="1.55"/><circle cx="8.6" cy="8.9" r="1.55"/><circle cx="3.5" cy="15.2" r="1.55"/><circle cx="8.6" cy="15.2" r="1.55"/></svg>
<div class="t" style="left:58.63px;top:256.00px;font-size:14px;font-family:'Liberation Mono',monospace;color:#7a879a;letter-spacing:-0.5px;">#5</div>
<div class="t" style="left:100.24px;top:253.00px;font-size:19px;color:#171717;letter-spacing:-0.545px;">Email</div>
<svg class="b" style="left:389px;top:255.5px" width="15" height="15" viewBox="0 0 15 15" fill="none"><path d="M2.8 2.8l9.4 9.4 M12.2 2.8l-9.4 9.4" stroke="#5b6b82" stroke-width="1.5" stroke-linecap="round"/></svg>
<div class="b" style="left:10.3px;top:295.4px;width:420px;height:48px;background:#fef3e6;border:1px solid #fcd9a8;border-radius:8px;"></div>
<svg class="b" style="left:30px;top:311.0px" width="12" height="18" viewBox="0 0 12 18" fill="#5b6b82"><circle cx="3.5" cy="2.6" r="1.55"/><circle cx="8.6" cy="2.6" r="1.55"/><circle cx="3.5" cy="8.9" r="1.55"/><circle cx="8.6" cy="8.9" r="1.55"/><circle cx="3.5" cy="15.2" r="1.55"/><circle cx="8.6" cy="15.2" r="1.55"/></svg>
<div class="t" style="left:58.63px;top:313.00px;font-size:14px;font-family:'Liberation Mono',monospace;color:#7a879a;letter-spacing:-0.5px;">#6</div>
<svg class="b" style="left:100.5px;top:310.5px" width="18" height="19" viewBox="0 0 15 16" fill="none"><rect x="1.6" y="6.7" width="11.8" height="7.8" rx="2" stroke="#fb9a14" stroke-width="1.6"/><path d="M4.3 6.7V5a3.2 3.2 0 0 1 6.4 0v1.7" stroke="#fb9a14" stroke-width="1.6"/></svg>
<div class="t" style="left:129.53px;top:310.00px;font-size:19px;color:#171717;letter-spacing:-0.073px;">Updated At</div>
<svg class="b" style="left:389px;top:312.5px" width="15" height="15" viewBox="0 0 15 15" fill="none"><path d="M2.8 2.8l9.4 9.4 M12.2 2.8l-9.4 9.4" stroke="#5b6b82" stroke-width="1.5" stroke-linecap="round"/></svg>
<div class="b" style="left:10.3px;top:352.4px;width:420px;height:48px;background:#fff;border:1px solid #e2e8f0;border-radius:8px;"></div>
<svg class="b" style="left:30px;top:368.0px" width="12" height="18" viewBox="0 0 12 18" fill="#5b6b82"><circle cx="3.5" cy="2.6" r="1.55"/><circle cx="8.6" cy="2.6" r="1.55"/><circle cx="3.5" cy="8.9" r="1.55"/><circle cx="8.6" cy="8.9" r="1.55"/><circle cx="3.5" cy="15.2" r="1.55"/><circle cx="8.6" cy="15.2" r="1.55"/></svg>
<div class="t" style="left:58.63px;top:370.00px;font-size:14px;font-family:'Liberation Mono',monospace;color:#7a879a;letter-spacing:-0.5px;">#7</div>
<div class="t" style="left:101.37px;top:367.00px;font-size:19px;color:#171717;letter-spacing:-1.075px;">Tags</div>
<svg class="b" style="left:389px;top:369.5px" width="15" height="15" viewBox="0 0 15 15" fill="none"><path d="M2.8 2.8l9.4 9.4 M12.2 2.8l-9.4 9.4" stroke="#5b6b82" stroke-width="1.5" stroke-linecap="round"/></svg>
<div class="b" style="left:10.3px;top:409.4px;width:420px;height:48px;background:#fff;border:1px solid #e2e8f0;border-radius:8px;"></div>
<svg class="b" style="left:30px;top:425.0px" width="12" height="18" viewBox="0 0 12 18" fill="#5b6b82"><circle cx="3.5" cy="2.6" r="1.55"/><circle cx="8.6" cy="2.6" r="1.55"/><circle cx="3.5" cy="8.9" r="1.55"/><circle cx="8.6" cy="8.9" r="1.55"/><circle cx="3.5" cy="15.2" r="1.55"/><circle cx="8.6" cy="15.2" r="1.55"/></svg>
<div class="t" style="left:58.63px;top:427.00px;font-size:14px;font-family:'Liberation Mono',monospace;color:#7a879a;letter-spacing:-0.5px;">#8</div>
<div class="t" style="left:100.24px;top:424.00px;font-size:19px;color:#171717;letter-spacing:0.026px;">Priority</div>
<svg class="b" style="left:389px;top:426.5px" width="15" height="15" viewBox="0 0 15 15" fill="none"><path d="M2.8 2.8l9.4 9.4 M12.2 2.8l-9.4 9.4" stroke="#5b6b82" stroke-width="1.5" stroke-linecap="round"/></svg>
<div class="b" style="left:10.3px;top:466.4px;width:420px;height:48px;background:#fff;border:1px solid #e2e8f0;border-radius:8px;"></div>
</div>
<div class="b" style="left:684.5px;top:746px;width:847px;height:19px;background:#f0f3f8;border-top:1px solid #e2e8f0;"></div>
<div class="b" style="left:1312.6px;top:762.2px;width:141px;height:40px;background:#fff;border:1px solid #e2e8f0;border-radius:8px;"></div>
<div class="b" style="left:1465.6px;top:762.2px;width:120px;height:40px;background:#0ea5f5;border-radius:8px;"></div>
<div class="b" style="left:691.2px;top:227.1px;width:199.6px;height:44.1px;border:3px solid #1fd6a6;box-shadow:1px 1px 3px rgba(0,0,0,0.25);"></div>
<div class="b" style="left:986.3px;top:102px;width:124.7px;height:72.7px;border:3px solid #1fd6a6;box-shadow:1px 1px 3px rgba(0,0,0,0.25);"></div>
</body></html>
